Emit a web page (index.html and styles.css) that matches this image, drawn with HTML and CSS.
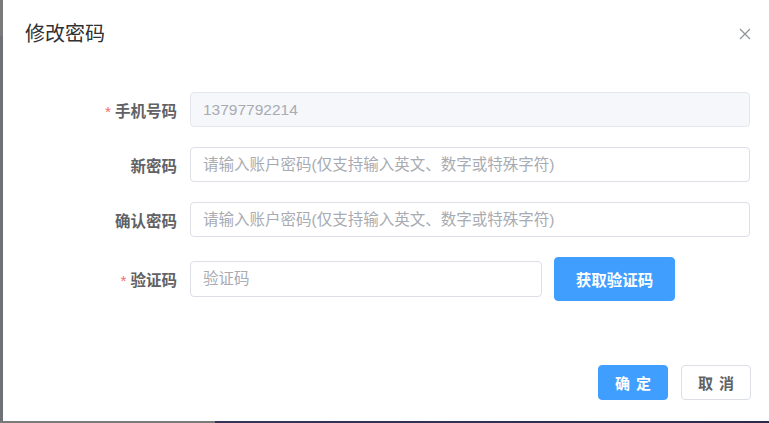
FILE: index.html
```html
<!DOCTYPE html>
<html>
<head>
<meta charset="utf-8">
<title>修改密码</title>
<link rel="stylesheet" href="styles.css">
</head>
<body>
<div class="dialog">
  <div class="dialog-header">
    <span class="dialog-title">修改密码</span>
    <button class="dialog-close" type="button" aria-label="关闭">
      <svg width="12" height="12" viewBox="0 0 12 12"><path d="M1 1 L11 11 M11 1 L1 11" stroke="#909399" stroke-width="1.2" fill="none"/></svg>
    </button>
  </div>

  <form class="form">
    <label class="form-label is-required">手机号码</label>
    <div class="form-field">
      <input class="input" type="text" value="13797792214" disabled>
    </div>

    <label class="form-label">新密码</label>
    <div class="form-field">
      <input class="input" type="password" placeholder="请输入账户密码(仅支持输入英文、数字或特殊字符)">
    </div>

    <label class="form-label">确认密码</label>
    <div class="form-field">
      <input class="input" type="password" placeholder="请输入账户密码(仅支持输入英文、数字或特殊字符)">
    </div>

    <label class="form-label is-required">验证码</label>
    <div class="form-field code-field">
      <input class="input" type="text" placeholder="验证码">
      <button class="btn btn-primary btn-code" type="button">获取验证码</button>
    </div>
  </form>

  <div class="dialog-footer">
    <button class="btn btn-primary btn-small" type="button">确 定</button>
    <button class="btn btn-default btn-small" type="button">取 消</button>
  </div>
</div>
<div class="backdrop-edge"></div>
</body>
</html>
```

FILE: styles.css
```css
html, body {
   margin: 0;
   padding: 0;
}

body {
   width: 769px;
   height: 423px;
   overflow: hidden;
   background: linear-gradient(to bottom, #7a7a7a 0, #7a7a7a 36px, #6e7277 36px);
   font-family: "Liberation Sans", "Noto Sans CJK SC", sans-serif;
}

.dialog {
   margin-left: 3px;
   width: 766px;
   height: 421px;
   background: #fff;
   box-sizing: border-box;
}

.backdrop-edge {
   height: 2px;
   background: linear-gradient(to right, #7a7a7a 0, #7a7a7a 215px, #34345a 215px, #2d2c48 100%);
}

/* header */

.dialog-header {
   display: flex;
   justify-content: space-between;
   align-items: center;
   padding: 22px 17px 0 22px;
   height: 24px;
}

.dialog-title {
   font-size: 20px;
   line-height: 24px;
   color: #303133;
}

.dialog-close {
   border: none;
   background: transparent;
   padding: 0;
   width: 14px;
   height: 14px;
   display: flex;
   align-items: center;
   justify-content: center;
   cursor: pointer;
}

/* form */

.form {
   display: grid;
   grid-template-columns: 110px 1fr;
   row-gap: 20px;
   align-items: center;
   margin: 46px 19px 0 77px;
}

.form-label {
   text-align: right;
   padding-right: 13px;
   font-size: 15.5px;
   font-weight: bold;
   color: #606266;
}

.form-label.is-required::before {
   content: "*";
   color: #f56c6c;
   font-weight: normal;
   margin-right: 4px;
}

.form-field {
   display: flex;
   align-items: center;
}

.code-field {
   gap: 12px;
}

.input {
   flex: 1;
   min-width: 0;
   height: 35px;
   box-sizing: border-box;
   border: 1px solid #dcdfe6;
   border-radius: 4px;
   padding: 0 12px;
   font-family: inherit;
   font-size: 15.5px;
   color: #606266;
   background: #fff;
   outline: none;
}

.input::placeholder {
   color: #a8abb2;
}

.input:disabled {
   background: #f5f7fa;
   border-color: #e4e7ed;
   color: #a8abb2;
}

.code-field .input {
   flex: 0 0 352px;
   height: 36px;
}

/* buttons */

.btn {
   box-sizing: border-box;
   border-radius: 4px;
   font-family: inherit;
   font-weight: bold;
   font-size: 15px;
   cursor: pointer;
   padding: 0;
}

.btn-primary {
   background: #409eff;
   border: 1px solid #409eff;
   color: #fff;
}

.btn-default {
   background: #fff;
   border: 1px solid #dcdfe6;
   color: #606266;
}

.btn-code {
   width: 121px;
   height: 44px;
   font-size: 15.5px;
}

.btn-small {
   width: 70px;
   height: 35px;
   letter-spacing: 1px;
   text-indent: 1px;
}

/* footer */

.dialog-footer {
   display: flex;
   justify-content: flex-end;
   gap: 13px;
   margin-top: 64px;
   padding-right: 18px;
}
```
